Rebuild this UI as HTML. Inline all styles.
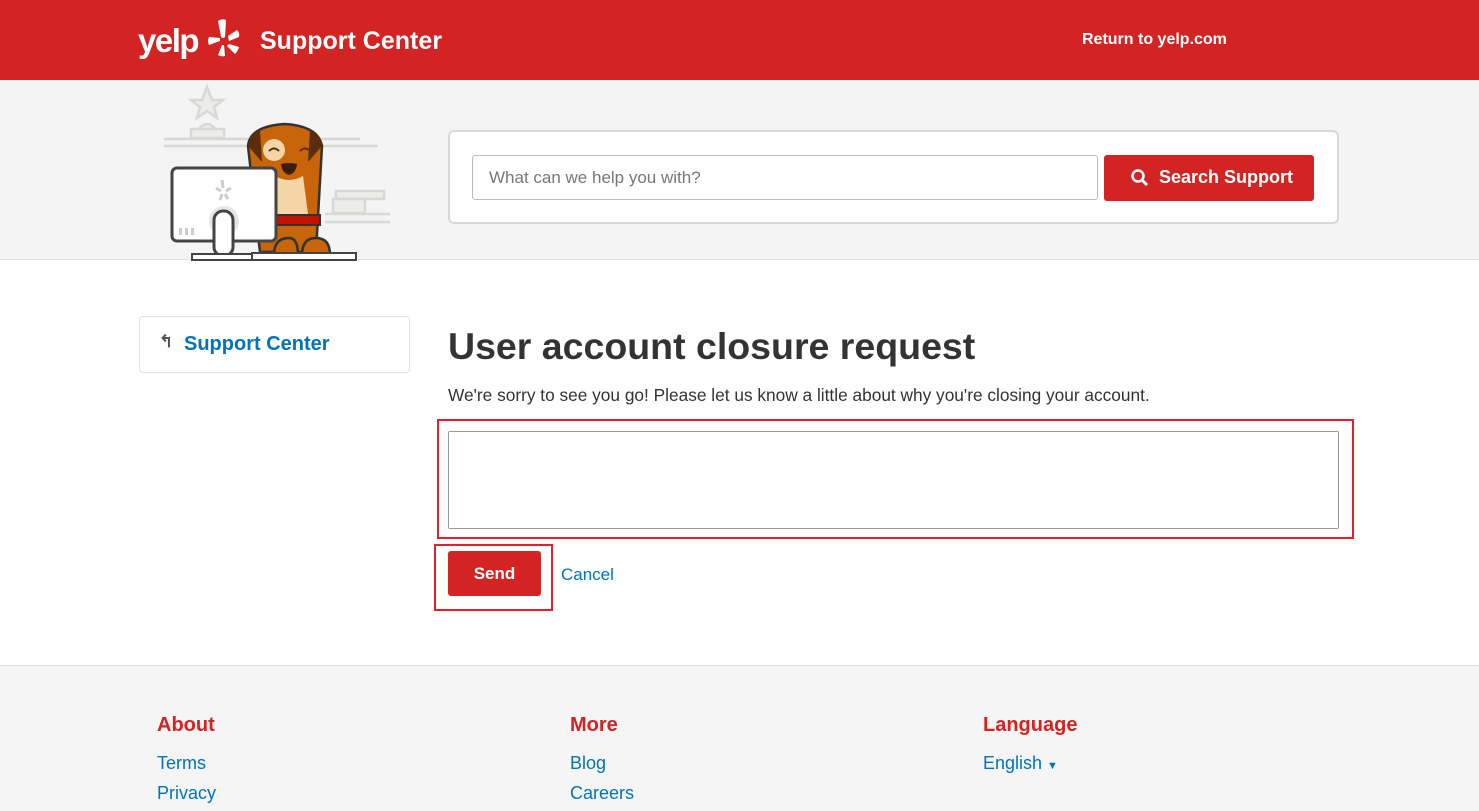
<!DOCTYPE html>
<html><head><meta charset="utf-8"><style>
*{box-sizing:border-box;margin:0;padding:0}
body{width:1479px;height:811px;overflow:hidden;font-family:"Liberation Sans",Arial,sans-serif;background:#fff;position:relative}
.hdr{position:absolute;left:0;top:0;width:1479px;height:80px;background:#d32323;color:#fff}
.hero{position:absolute;left:0;top:80px;width:1479px;height:180px;background:#f4f4f4;border-bottom:1px solid #e0e0e0}
.abs{position:absolute}
.foot{position:absolute;left:0;top:665px;width:1479px;height:146px;background:#f5f5f5;border-top:1px solid #ddd}
.fh{position:absolute;color:#d32323;font-weight:bold;font-size:20px}
.fl{position:absolute;color:#0073bb;font-size:18px}
</style></head><body>
<div class="hdr">
 <div class="abs" style="left:138px;top:22px;font-size:33px;font-weight:bold;letter-spacing:-1.5px">yelp</div>
 <svg class="abs" style="left:206px;top:18px" width="34" height="40" viewBox="0 0 34 40" fill="#fff">
  <path d="M12 3 Q16 0 20 2 L19 19 Q17 21 15 19 Z"/><path d="M22 18 L31 12 Q34 15 33 19 L23 23 Z"/><path d="M23 26 L33 29 Q32 33 29 36 L21 28 Z"/><path d="M18 27 L19 38 Q15 39 12 37 L16 27 Z"/><path d="M14 23 L3 27 Q1 23 3 19 L14 20 Z"/>
 </svg>
 <div class="abs" style="left:260px;top:27px;font-size:25px;font-weight:bold">Support Center</div>
 <div class="abs" style="left:1082px;top:31px;font-size:16px;font-weight:bold">Return to yelp.com</div>
</div>
<div class="hero">
 <svg class="abs" style="left:150px;top:0" width="250" height="182" viewBox="0 0 250 182">
  <g stroke="#d8d8d4" stroke-width="2.5" fill="#ececea"><polygon points="57,7 62,20 73,20 64,27 67,38 57,31 47,38 50,27 41,20 52,20"/><path d="M48 50 Q57 38 66 50 Z"/><rect x="41" y="49" width="33" height="9"/><line x1="14" y1="59" x2="210" y2="59"/><line x1="14" y1="66" x2="228" y2="66"/><rect x="186" y="111" width="48" height="8"/><rect x="183" y="119" width="32" height="14"/><line x1="175" y1="134" x2="240" y2="134"/><line x1="175" y1="142" x2="240" y2="142"/></g>
  <path d="M98 66 Q100 46 135 44 Q168 46 172 66 L166 172 L110 172 Z" fill="#c8650a" stroke="#333" stroke-width="2.5"/>
  <path d="M98 66 Q100 52 110 50 L112 82 Z M172 66 Q170 52 160 50 L158 82 Z" fill="#5a2e0a"/>
  <circle cx="124" cy="70" r="11" fill="#f3d5a6"/>
  <path d="M119 71 q5 -5 10 0 M150 71 q5 -5 10 0" stroke="#5a2e0a" stroke-width="2" fill="none"/>
  <path d="M131 84 Q139 82 147 84 Q146 93 139 95 Q132 93 131 84 Z" fill="#3b1d0b"/>
  <path d="M125 96 Q139 104 153 96 L158 134 L120 134 Z" fill="#f3d5a6"/>
  <rect x="124" y="135" width="46" height="10" fill="#c41200" stroke="#333" stroke-width="2"/>
  <path d="M124 175 Q124 158 139 158 Q148 158 148 175 Z M152 175 Q152 158 166 158 Q180 158 180 175 Z" fill="#c8650a" stroke="#333" stroke-width="2.5"/>
  <rect x="22" y="88" width="104" height="73" rx="5" fill="#fff" stroke="#444" stroke-width="3"/>
  <circle cx="74" cy="141" r="15" fill="#e6e6e6"/>
  <g fill="#ccc"><rect x="29" y="148" width="3" height="7"/><rect x="35" y="148" width="3" height="7"/><rect x="41" y="148" width="3" height="7"/></g>
  <g stroke="#ccc" stroke-width="3"><line x1="72" y1="100" x2="73" y2="108"/><line x1="66" y1="108" x2="71" y2="111"/><line x1="76" y1="111" x2="81" y2="108"/><line x1="72" y1="114" x2="70" y2="120"/><line x1="75" y1="114" x2="78" y2="119"/></g>
  <rect x="64" y="131" width="19" height="45" rx="9" fill="#fff" stroke="#444" stroke-width="3"/>
  <rect x="42" y="174" width="62" height="6" fill="#fff" stroke="#444" stroke-width="2"/>
  <rect x="102" y="173" width="104" height="7" fill="#fff" stroke="#444" stroke-width="2"/>
 </svg>
 <div class="abs" style="left:448px;top:50px;width:891px;height:94px;background:#fff;border:2px solid #d8d8d8;border-radius:6px">
  <div class="abs" style="left:22px;top:23px;width:626px;height:45px;border:1px solid #bbb;border-radius:3px;font-size:17px;color:#777;padding:12px 16px">What can we help you with?</div>
  <div class="abs" style="left:654px;top:23px;width:210px;height:46px;background:#d32323;border-radius:3px;color:#fff;font-weight:bold;font-size:18px;padding:12px 0 0 55px">Search Support</div>
  <svg class="abs" style="left:680px;top:36px" width="20" height="20" viewBox="0 0 20 20"><circle cx="8" cy="8" r="5.5" stroke="#fff" stroke-width="2.5" fill="none"/><line x1="12" y1="12" x2="17" y2="17" stroke="#fff" stroke-width="3"/></svg>
 </div>
</div>
<div class="abs" style="left:139px;top:316px;width:271px;height:57px;border:1px solid #e2e2e2;border-radius:4px">
 <div class="abs" style="left:19px;top:15px;font-size:17px;color:#555;font-weight:bold">↰</div>
 <div class="abs" style="left:44px;top:16px;font-size:20px;color:#0073bb;font-weight:bold">Support Center</div>
</div>
<div class="abs" style="left:448px;top:325px;font-size:37.5px;font-weight:bold;color:#333">User account closure request</div>
<div class="abs" style="left:448px;top:385px;font-size:17.3px;color:#333">We're sorry to see you go! Please let us know a little about why you're closing your account.</div>
<div class="abs" style="left:437px;top:419px;width:917px;height:120px;border:2px solid #e0202a"></div>
<div class="abs" style="left:448px;top:431px;width:891px;height:98px;border:1px solid #999;border-radius:2px"></div>
<div class="abs" style="left:434px;top:544px;width:119px;height:67px;border:2px solid #e0202a"></div>
<div class="abs" style="left:448px;top:551px;width:93px;height:45px;background:#d32323;border-radius:3px;color:#fff;font-weight:bold;font-size:17px;text-align:center;line-height:45px">Send</div>
<div class="abs" style="left:561px;top:565px;font-size:17px;color:#0073bb">Cancel</div>
<div class="foot">
 <div class="fh" style="left:157px;top:48px">About</div>
 <div class="fl" style="left:157px;top:87px">Terms</div>
 <div class="fl" style="left:157px;top:117px">Privacy</div>
 <div class="fh" style="left:570px;top:48px">More</div>
 <div class="fl" style="left:570px;top:87px">Blog</div>
 <div class="fl" style="left:570px;top:117px">Careers</div>
 <div class="fh" style="left:983px;top:48px">Language</div>
 <div class="fl" style="left:983px;top:87px">English <span style="font-size:11px">▼</span></div>
</div>
</body></html>
